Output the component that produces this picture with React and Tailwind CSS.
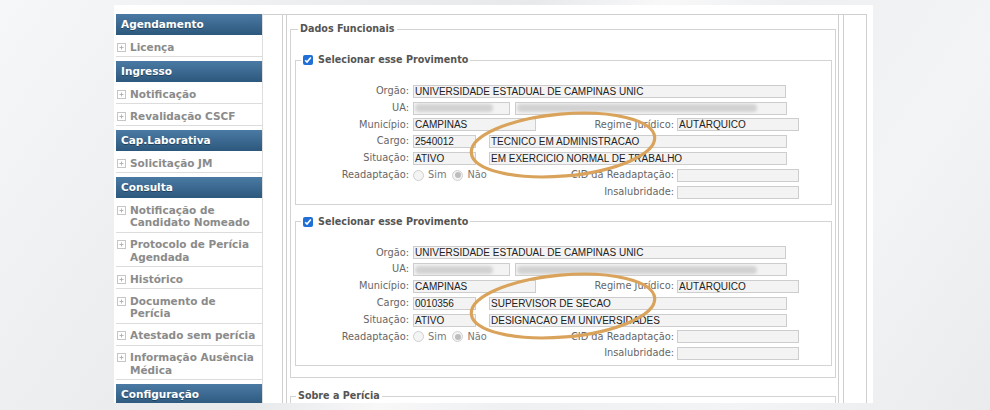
import React from 'react';

// Sidebar menu data
const menu = [
    { title: 'Agendamento', items: [['Licença']] },
    { title: 'Ingresso', items: [['Notificação'], ['Revalidação CSCF']] },
    { title: 'Cap.Laborativa', items: [['Solicitação JM']] },
    {
        title: 'Consulta',
        items: [
            ['Notificação de', 'Candidato Nomeado'],
            ['Protocolo de Perícia', 'Agendada'],
            ['Histórico'],
            ['Documento de', 'Perícia'],
            ['Atestado sem perícia'],
            ['Informação Ausência', 'Médica'],
        ],
    },
    { title: 'Configuração', items: [] },
];

const provimentos = [
    { cargo: '0010356', cargoDesc: 'SUPERVISOR DE SECAO', situacaoDesc: 'DESIGNACAO EM UNIVERSIDADES' },
];

const PlusIcon = () => (
    <svg width="9" height="9" viewBox="0 0 9 9" className="mt-[2px] shrink-0">
        <rect x="0.5" y="0.5" width="8" height="8" fill="#fff" stroke="#c6c6c6" />
        <path d="M2.5 4.5h4M4.5 2.5v4" stroke="#b5b5b5" strokeWidth="1" />
    </svg>
);

const Field = ({ className = '', children }) => (
    <div className={`h-[13px] shrink-0 flex items-center border border-[#cdcdcd] bg-[#f3f3f3] pl-[1px] overflow-hidden whitespace-nowrap font-['Liberation_Sans',Arial,sans-serif] text-[10px] leading-[11px] text-[#222] ${className}`}>
        {children}
    </div>
);

const Blur = ({ className = '' }) => (
    <div className={`h-[8px] rounded-full bg-[#d2d2d2] blur-[1.5px] ${className}`}></div>
);

const Label = ({ className = '', children }) => (
    <div className={`shrink-0 text-right text-[9.8px] text-[#666] whitespace-nowrap ${className}`}>{children}</div>
);

const Row = ({ children }) => <div className="flex items-center h-[16.8px]">{children}</div>;

const Radio = ({ checked }) => (
    <span className="w-[11px] h-[11px] rounded-full border border-[#d0d0d0] bg-[#f4f4f4] flex items-center justify-center shrink-0">
        {checked && <span className="w-[6px] h-[6px] rounded-full bg-[#bdbdbd]"></span>}
    </span>
);

const Provimento = ({ cargo, cargoDesc, situacaoDesc, className = '' }) => (
    <fieldset className={`w-[537px] border border-[#d3d3d3] pt-[17px] pb-[3px] ${className}`}>
        <legend className="ml-[5px] px-[2px] flex items-center h-[12px]">
            <span className="w-[10px] h-[10px] rounded-[2px] bg-[#1f6fd6] flex items-center justify-center">
                <svg width="8" height="8" viewBox="0 0 8 8">
                    <path d="M1.2 4.2l1.8 1.8 3.8-4.6" fill="none" stroke="#fff" strokeWidth="1.6" />
                </svg>
            </span>
            <span className="ml-[5px] text-[9.6px] font-bold text-[#555] leading-[12px]">Selecionar esse Provimento</span>
        </legend>

        <Row>
            <Label className="w-[113px]">Orgão:</Label>
            <Field className="ml-[4px] w-[373px]">UNIVERSIDADE ESTADUAL DE CAMPINAS UNIC</Field>
        </Row>
        <Row>
            <Label className="w-[113px]">UA:</Label>
            <Field className="ml-[4px] w-[97px]"><Blur className="w-[78px]" /></Field>
            <Field className="ml-[5px] w-[272px]"><Blur className="w-[240px]" /></Field>
        </Row>
        <Row>
            <Label className="w-[113px]">Município:</Label>
            <Field className="ml-[4px] w-[123px]">CAMPINAS</Field>
            <Label className="w-[138px]">Regime Jurídico:</Label>
            <Field className="ml-[3px] w-[122px]">AUTÀRQUICO</Field>
        </Row>
        <Row>
            <Label className="w-[113px]">Cargo:</Label>
            <Field className="ml-[4px] w-[63px]">{cargo}</Field>
            <Field className="ml-[13px] w-[298px]">{cargoDesc}</Field>
        </Row>
        <Row>
            <Label className="w-[113px]">Situação:</Label>
            <Field className="ml-[4px] w-[63px]">ATIVO</Field>
            <Field className="ml-[13px] w-[298px]">{situacaoDesc}</Field>
        </Row>
        <Row>
            <Label className="w-[113px]">Readaptação:</Label>
            <div className="ml-[4px] w-[123px] flex items-center text-[9.8px] text-[#777]">
                <Radio />
                <span className="ml-[4px]">Sim</span>
                <span className="ml-[6px]"><Radio checked /></span>
                <span className="ml-[4px]">Não</span>
            </div>
            <Label className="w-[138px]">CID da Readaptação:</Label>
            <Field className="ml-[3px] w-[122px]"></Field>
        </Row>
        <Row>
            <div className="w-[240px] shrink-0"></div>
            <Label className="w-[138px]">Insalubridade:</Label>
            <Field className="ml-[3px] w-[122px]"></Field>
        </Row>
    </fieldset>
);

const App = () => {
    return (
        <div className="relative w-[990px] h-[410px] overflow-hidden font-['DejaVu_Sans',Verdana,sans-serif] bg-[linear-gradient(125deg,#f6f7f8_0%,#eceef0_25%,#e7e9eb_42%,#f8f8f9_52%,#eef0f1_62%,#f3f4f5_80%,#e9ebed_100%)]">
            {/* White page panel */}
            <div className="ml-[114px] pt-[9px] mt-[5px] w-[759px] h-[398px] bg-white flex overflow-hidden">
                {/* Sidebar */}
                <div className="ml-[2px] w-[147px] self-start border-r border-[#dedede]">
                    {menu.map((group, gi) => (
                        <div key={gi} className={gi < menu.length - 1 ? 'mb-[4px]' : ''}>
                            <div className="h-[21px] px-[5px] flex items-center bg-gradient-to-b from-[#4a7aa4] to-[#2d587d] text-white text-[10.5px] font-bold whitespace-nowrap [text-shadow:0_1px_0_rgba(0,0,0,0.35)]">
                                {group.title}
                            </div>
                            {group.items.map((lines, ii) => (
                                <div key={ii} className="flex items-start pl-[1px] pt-[5.5px] pb-[3px] border-b border-[#dcdcdc]">
                                    <PlusIcon />
                                    <div className="ml-[4px] text-[10.5px] font-bold leading-[12.5px] text-[#8b8b8b] whitespace-nowrap">
                                        {lines.map((l, li) => <div key={li}>{l}</div>)}
                                    </div>
                                </div>
                            ))}
                        </div>
                    ))}
                </div>

                {/* Main content */}
                <div className="w-[604px] flex flex-col border-t border-r border-[#cfcfcf] pl-[19px]">
                    <div className="flex-1 w-[562px] flex flex-col border-x border-[#cfcfcf] pl-[3px]">
                        <div className="flex-1 w-[553px] border-x border-[#cfcfcf]">
                            <fieldset className="mt-[8px] ml-[3px] w-[546px] border border-[#d3d3d3] pl-[4px] pr-[3px] pt-[19px] pb-[11px]">
                                <legend className="ml-[3px] px-[2px] text-[9.6px] font-bold text-[#555] leading-[12px]">Dados Funcionais</legend>
                                <Provimento cargo="2540012" cargoDesc="TECNICO EM ADMINISTRACAO" situacaoDesc="EM EXERCICIO NORMAL DE TRABALHO" />
                                {provimentos.map((p, i) => (
                                    <Provimento key={i} className="mt-[11px]" {...p} />
                                ))}
                            </fieldset>
                            <fieldset className="mt-[12px] ml-[3px] w-[546px] h-[40px] border border-[#d3d3d3]">
                                <legend className="ml-[5px] px-[2px] text-[9.6px] font-bold text-[#555] leading-[12px]">Sobre a Perícia</legend>
                            </fieldset>
                        </div>
                    </div>
                </div>
            </div>

            {/* Hand-drawn highlight ovals */}
            <svg className="absolute left-0 top-0 pointer-events-none" width="990" height="410" viewBox="0 0 990 410">
                <ellipse cx="563" cy="145" rx="92" ry="31" transform="rotate(-5 563 145)" fill="none" stroke="#d9a35b" strokeWidth="3.2" />
                <ellipse cx="563" cy="306" rx="92" ry="31" transform="rotate(-5 563 306)" fill="none" stroke="#d9a35b" strokeWidth="3.2" />
            </svg>
        </div>
    );
};

export default App;
